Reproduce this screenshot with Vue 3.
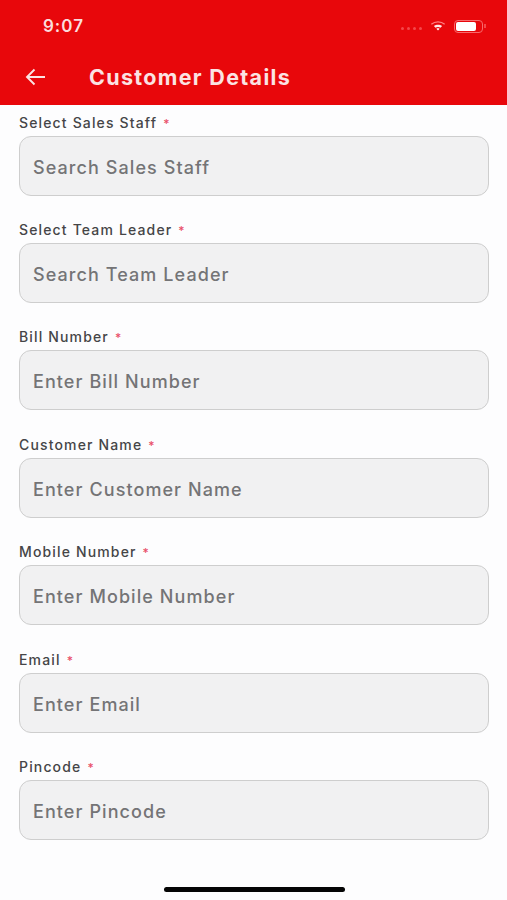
<script setup>
const fields = [
  { label: 'Select Sales Staff', placeholder: 'Search Sales Staff' },
  { label: 'Select Team Leader', placeholder: 'Search Team Leader' },
  { label: 'Bill Number', placeholder: 'Enter Bill Number' },
  { label: 'Customer Name', placeholder: 'Enter Customer Name' },
  { label: 'Mobile Number', placeholder: 'Enter Mobile Number' },
  { label: 'Email', placeholder: 'Enter Email' },
  { label: 'Pincode', placeholder: 'Enter Pincode' },
]
</script>

<template>
  <div class="screen">
    <header class="header">
      <div class="status">
        <span class="time">9:07</span>
        <div class="status-icons">
          <span class="dots"><i></i><i></i><i></i><i></i></span>
          <svg class="wifi" width="16" height="12" viewBox="0 0 18 13">
            <path d="M1.5 4.6C5.7 1 12.3 1 16.5 4.6" fill="none" stroke="#ff7d80" stroke-width="1.5" />
            <path d="M4.4 6.6C7 4.6 11 4.6 13.6 6.6L11.8 8.6C10.2 7.4 7.8 7.4 6.2 8.6Z" fill="#ffe9e9" />
            <path d="M7.2 9.5C8.3 8.8 9.7 8.8 10.8 9.5L9 11.6Z" fill="#fff" />
          </svg>
          <span class="battery"><span class="battery-fill"></span></span>
          <span class="battery-tip"></span>
        </div>
      </div>
      <div class="toolbar">
        <svg class="back" width="21" height="18" viewBox="0 0 21 18">
          <path d="M20 9H2M9.5 1.5L2 9L9.5 16.5" fill="none" stroke="#fbe3e3" stroke-width="1.9" />
        </svg>
        <h1 class="title">Customer Details</h1>
      </div>
    </header>

    <main class="form">
      <div v-for="field in fields" :key="field.label" class="field">
        <div class="label">{{ field.label }}<span class="req">*</span></div>
        <div class="input"><span class="placeholder">{{ field.placeholder }}</span></div>
      </div>
    </main>

    <div class="home-bar"></div>
  </div>
</template>

<style scoped>
.screen {
  position: relative;
  width: 507px;
  height: 900px;
  background: #fdfdfe;
  font-family: Inter, "Liberation Sans", sans-serif;
  overflow: hidden;
  display: flex;
  flex-direction: column;
}
.header {
  height: 105px;
  background: #e8070b;
  flex: none;
}
.status {
  height: 52px;
  padding: 0 21px 0 43px;
  display: flex;
  align-items: center;
  justify-content: space-between;
  box-sizing: border-box;
}
.time {
  font-size: 17px;
  font-weight: 600;
  letter-spacing: 1px;
  color: #fbdcdc;
}
.status-icons {
  display: flex;
  align-items: center;
}
.dots {
  display: flex;
  gap: 3px;
  margin: 4px 8px 0 0;
}
.dots i {
  width: 3px;
  height: 3px;
  border-radius: 50%;
  background: #f4474a;
}
.wifi {
  margin-right: 8px;
}
.battery {
  width: 29px;
  height: 13px;
  box-sizing: border-box;
  border: 1.5px solid #f76a6c;
  border-radius: 4px;
  padding: 1px;
  display: flex;
}
.battery-fill {
  width: 20px;
  background: #fff;
  border-radius: 2px;
}
.battery-tip {
  width: 2px;
  height: 4px;
  margin-left: 1px;
  background: #f4474a;
}
.toolbar {
  height: 53px;
  padding: 0 0 3px 25px;
  display: flex;
  align-items: center;
  box-sizing: border-box;
}
.back {
  margin-right: 43px;
}
.title {
  margin: 0;
  font-size: 21.5px;
  font-weight: 700;
  letter-spacing: 1.32px;
  color: #fbe3e3;
}
.form {
  padding: 7.7px 18px 0 19px;
  display: flex;
  flex-direction: column;
}
.field {
  height: 107.4px;
}
.label {
  height: 23px;
  font-size: 14px;
  line-height: 19px;
  font-weight: 500;
  letter-spacing: 1.15px;
  color: #454547;
}
.req {
  margin-left: 6px;
  color: #e9506a;
  font-size: 12px;
}
.input {
  height: 60px;
  box-sizing: border-box;
  border: 1.5px solid #cecece;
  border-radius: 12px;
  background: #f1f1f2;
  padding: 3px 13px 0;
  display: flex;
  align-items: center;
}
.placeholder {
  font-size: 18px;
  font-weight: 500;
  letter-spacing: 1.08px;
  color: #747476;
}
.home-bar {
  position: absolute;
  left: 164px;
  top: 887px;
  width: 181px;
  height: 5px;
  border-radius: 3px;
  background: #050505;
}
</style>
